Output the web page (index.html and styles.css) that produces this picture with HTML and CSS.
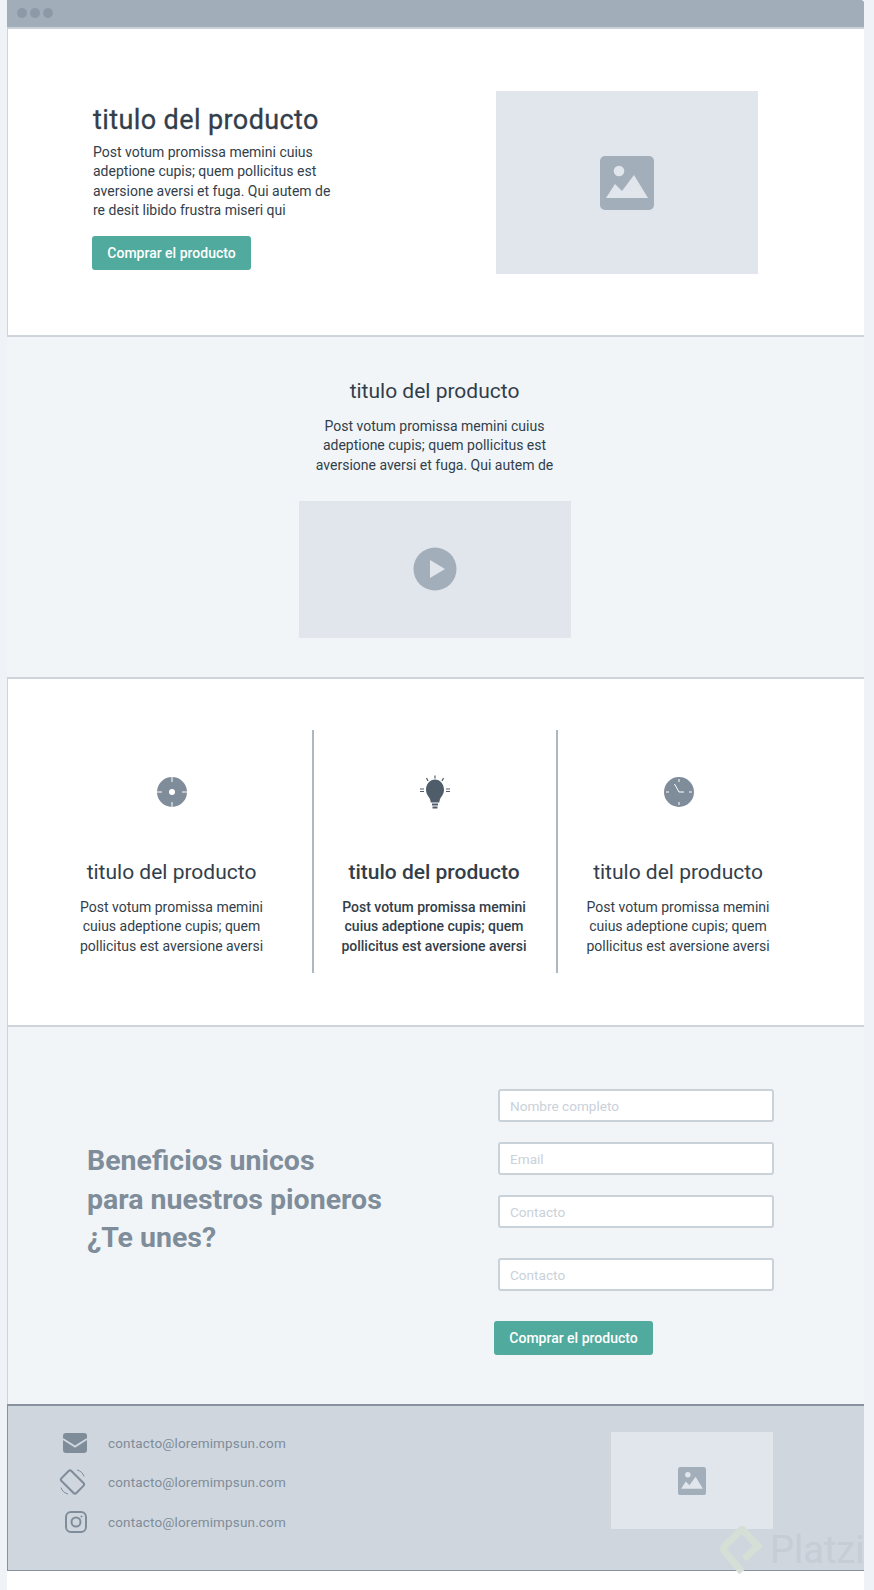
FILE: index.html
```html
<!DOCTYPE html>
<html lang="es">
<head>
    <meta charset="UTF-8">
    <title>titulo del producto</title>
    <link rel="stylesheet" href="styles.css">
</head>
<body>
    <div class="frame">
        <div class="topbar">
            <span class="dot"></span><span class="dot"></span><span class="dot"></span>
        </div>

        <section class="hero">
            <div class="hero-copy">
                <h1>titulo del producto</h1>
                <p>Post votum promissa memini cuius<br>adeptione cupis; quem pollicitus est<br>aversione aversi et fuga. Qui autem de<br>re desit libido frustra miseri qui</p>
                <a class="btn" href="#">Comprar el producto</a>
            </div>
            <div class="placeholder hero-img">
                <svg width="54" height="54" viewBox="0 0 54 54">
                    <rect width="54" height="54" rx="5" fill="#a2aeba"/>
                    <circle cx="19" cy="15" r="5.3" fill="#e1e5ec"/>
                    <path d="M6 42 L15 28 L22 35 L34 19 L48 42 Z" fill="#e1e5ec"/>
                </svg>
            </div>
        </section>

        <section class="video">
            <h2>titulo del producto</h2>
            <p>Post votum promissa memini cuius<br>adeptione cupis; quem pollicitus est<br>aversione aversi et fuga. Qui autem de</p>
            <div class="placeholder video-box">
                <svg width="44" height="44" viewBox="0 0 44 44">
                    <circle cx="22" cy="22" r="21.5" fill="#a2aeba"/>
                    <path d="M17 13 L32 22 L17 31 Z" fill="#e1e5ec"/>
                </svg>
            </div>
        </section>

        <section class="features">
            <div class="feature feature-first">
                <svg class="feature-icon" width="40" height="40" viewBox="0 0 40 40">
                    <circle cx="20" cy="20" r="15" fill="#7f8c99"/>
                    <circle cx="20" cy="20" r="3" fill="#fff"/>
                    <path d="M20 5v5M20 30v5M5 20h5M30 20h5" stroke="#fff" stroke-width="1"/>
                </svg>
                <h3>titulo del producto</h3>
                <p>Post votum promissa memini<br>cuius adeptione cupis; quem<br>pollicitus est aversione aversi</p>
            </div>
            <div class="feature feature-mid">
                <svg class="feature-icon" width="40" height="40" viewBox="0 0 40 40">
                    <path d="M20 7.500c5 0 9 4.500 9 10.500 0 4-2.500 6.500-4 9l-.8 3.500h-8.400l-.8-3.500c-1.500-2.500-4-5-4-9 0-6 4-10.500 9-10.500z" fill="#4f5d6b"/>
                    <path d="M17 31.500h6v2h-6zM17.500 34.500h5v2h-5z" fill="#4f5d6b"/>
                    <path d="M20 3.500v3M11.500 6l1.500 3M28.500 6l-1.500 3M5 17h4M5 19.500h4M31 17h4M31 19.500h4" stroke="#4f5d6b" stroke-width="1.200"/>
                </svg>
                <h3>titulo del producto</h3>
                <p>Post votum promissa memini<br>cuius adeptione cupis; quem<br>pollicitus est aversione aversi</p>
            </div>
            <div class="feature feature-last">
                <svg class="feature-icon" width="40" height="40" viewBox="0 0 40 40">
                    <circle cx="20" cy="20" r="15" fill="#7f8c99"/>
                    <path d="M20 7v3M20 30v3M7 20h3M30 20h3" stroke="#fff" stroke-width="1"/>
                    <path d="M15.500 12 L20 20 H25" stroke="#fff" stroke-width="1" fill="none"/>
                </svg>
                <h3>titulo del producto</h3>
                <p>Post votum promissa memini<br>cuius adeptione cupis; quem<br>pollicitus est aversione aversi</p>
            </div>
        </section>

        <section class="signup">
            <h2>Beneficios unicos<br>para nuestros pioneros<br>¿Te unes?</h2>
            <form class="signup-form">
                <input type="text" placeholder="Nombre completo">
                <input type="text" placeholder="Email">
                <input type="text" placeholder="Contacto">
                <input class="input-far" type="text" placeholder="Contacto">
                <a class="btn btn-form" href="#">Comprar el producto</a>
            </form>
        </section>

        <footer class="footer">
            <ul class="contacts">
                <li>
                    <svg width="30" height="28" viewBox="0 0 30 28">
                        <rect x="5" y="4" width="24" height="20" rx="3" fill="#7f8c99"/>
                        <path d="M5 10 L17 17.500 L29 10" fill="none" stroke="#cfd6de" stroke-width="2"/>
                    </svg>
                    contacto@loremimpsun.com
                </li>
                <li>
                    <svg width="30" height="28" viewBox="0 0 30 28" fill="none" stroke="#7f8c99">
                        <rect x="7.500" y="3.500" width="14" height="21" rx="2" stroke-width="2" transform="rotate(-45 14.500 14)"/>
                        <path d="M19 2c3.500.8 6 3 7 6.500M10 26c-3.500-.8-6-3-7-6.500" stroke-width="1"/>
                    </svg>
                    contacto@loremimpsun.com
                </li>
                <li>
                    <svg width="30" height="28" viewBox="0 0 30 28" fill="none" stroke="#7f8c99" stroke-width="2">
                        <rect x="8" y="4" width="20" height="20" rx="5"/>
                        <circle cx="18" cy="14" r="4.500"/>
                        <circle cx="23.500" cy="8.500" r="1" fill="#7f8c99" stroke="none"/>
                    </svg>
                    contacto@loremimpsun.com
                </li>
            </ul>
            <div class="placeholder footer-img">
                <svg width="28" height="28" viewBox="0 0 54 54">
                    <rect width="54" height="54" rx="5" fill="#a2aeba"/>
                    <circle cx="19" cy="15" r="5.300" fill="#e1e5ec"/>
                    <path d="M6 42 L15 28 L22 35 L34 19 L48 42 Z" fill="#e1e5ec"/>
                </svg>
            </div>
            <div class="watermark">
                <svg width="42" height="48" viewBox="0 0 42 48" fill="none">
                    <path d="M22 46 L5 26 Q2 23 5 20 L22 3 L38 20 L24 33" stroke="#d5dfd6" stroke-width="7"/>
                </svg>
                <span>Platzi</span>
            </div>
        </footer>
    </div>
</body>
</html>
```

FILE: styles.css
```css
*{
    box-sizing: border-box;
}

body{
    margin: 0;
    background-color: #eff3f7;
    font-family: "Roboto", "Liberation Sans", sans-serif;
    color: #323e4a;
}

h1, h2, h3, p{
    margin: 0;
    font-weight: 400;
}

.frame{
    width: 857px;
    min-height: 1590px;
    margin-left: 7px;
    background-color: #fff;
    overflow: hidden;
}

.topbar{
    height: 29px;
    padding: 8px 0 0 10px;
    background-color: #a1adb9;
    border-bottom: 2px solid #c9d1d9;
    border-radius: 0 3px 0 0;
    display: flex;
    gap: 3px;
}

.dot{
    width: 10px;
    height: 10px;
    border-radius: 50%;
    background-color: #8d99a6;
}

.placeholder{
    background-color: #e1e5ec;
    display: flex;
    align-items: center;
    justify-content: center;
}

.btn{
    display: block;
    width: 159px;
    height: 34px;
    line-height: 34px;
    text-align: center;
    background-color: #50aa9e;
    color: #fff;
    border-radius: 3px;
    font-size: 14px;
    font-weight: 500;
    text-decoration: none;
}

/* hero */
.hero{
    height: 308px;
    padding: 62px 106px 0 84px;
    background-color: #fff;
    border-bottom: 2px solid #cdd4dc;
    border-left: 1px solid #cdd4dc;
    display: flex;
    justify-content: space-between;
}

.hero-copy{
    padding-top: 12px;
}

.hero-copy h1{
    font-size: 27px;
    letter-spacing: .4px;
    -webkit-text-stroke: .3px #323e4a;
    line-height: 34px;
    margin-left: 1px;
}

.hero-copy p{
    font-size: 14px;
    line-height: 19.3px;
    margin: 6px 0 16px 1px;
}

.hero-img{
    width: 262px;
    height: 183px;
}

/* video */
.video{
    height: 342px;
    padding: 41px 2px 0 0;
    background-color: #f1f5f8;
    border-bottom: 2px solid #cdd4dc;
    display: flex;
    flex-direction: column;
    align-items: center;
    text-align: center;
}

.video h2{
    font-size: 21px;
    line-height: 26px;
}

.video p{
    font-size: 14px;
    line-height: 19.3px;
    margin-top: 13px;
}

.video-box{
    width: 272px;
    height: 137px;
    margin-top: 26px;
}

/* features */
.features{
    height: 348px;
    padding: 51px 0 0 42px;
    border-bottom: 2px solid #cdd4dc;
    border-left: 1px solid #cdd4dc;
    display: flex;
}

.feature{
    width: 244px;
    height: 243px;
    padding-top: 42px;
    text-align: center;
}

.feature-first{
    width: 243px;
    margin-right: 19px;
}

.feature-mid, .feature-last{
    border-left: 2px solid #adb6c1;
    padding-right: 2px;
}

.feature-icon{
    display: block;
    margin-left: calc(50% - 19px);
}

.feature-first .feature-icon{
    margin-left: calc(50% - 20px);
}

.feature-last .feature-icon{
    margin-left: calc(50% - 19.500px);
}

.feature h3{
    font-size: 21px;
    line-height: 26px;
    margin-top: 47px;
}

.feature p{
    font-size: 14px;
    line-height: 19.3px;
    margin-top: 13px;
}

.feature-mid h3, .feature-mid p{
    font-weight: 500;
}

/* signup */
.signup{
    height: 377px;
    padding: 62px 90px 0 79px;
    background-color: #f1f5f8;
    border-left: 1px solid #cdd4dc;
    display: flex;
    justify-content: space-between;
}

.signup h2{
    font-size: 28.500px;
    line-height: 38.500px;
    font-weight: 700;
    color: #7f8c99;
    padding-top: 53px;
}

.signup-form{
    width: 276px;
    display: flex;
    flex-direction: column;
}

.signup-form input{
    height: 33px;
    margin-bottom: 20px;
    padding: 0 10px;
    border: 2px solid #c9d1d9;
    border-radius: 3px;
    background-color: #fff;
    font-family: inherit;
    font-size: 13.600px;
}

.signup-form input::placeholder{
    color: #c9d1d9;
}

.signup-form .input-far{
    margin-top: 10px;
    margin-bottom: 30px;
}

.btn-form{
    margin-left: -4px;
}

/* footer */
.footer{
    position: relative;
    height: 167px;
    padding: 17px 91px 0 50px;
    background-color: #cfd6de;
    border: 1px solid #87929e;
    border-width: 2px 0 1px 1px;
    display: flex;
    justify-content: space-between;
}

.contacts{
    list-style: none;
    margin: 0;
    padding: 0;
}

.contacts li{
    height: 39.500px;
    display: flex;
    align-items: center;
    gap: 20px;
    font-size: 13.500px;
    letter-spacing: .15px;
    color: #7f8c99;
}

.footer-img{
    width: 162px;
    height: 97px;
    margin-top: 9px;
}

.watermark{
    position: absolute;
    left: 712px;
    bottom: -4px;
    display: flex;
    align-items: center;
    gap: 8px;
    white-space: nowrap;
}

.watermark span{
    font-size: 38px;
    color: #c5cdd5;
}
```
